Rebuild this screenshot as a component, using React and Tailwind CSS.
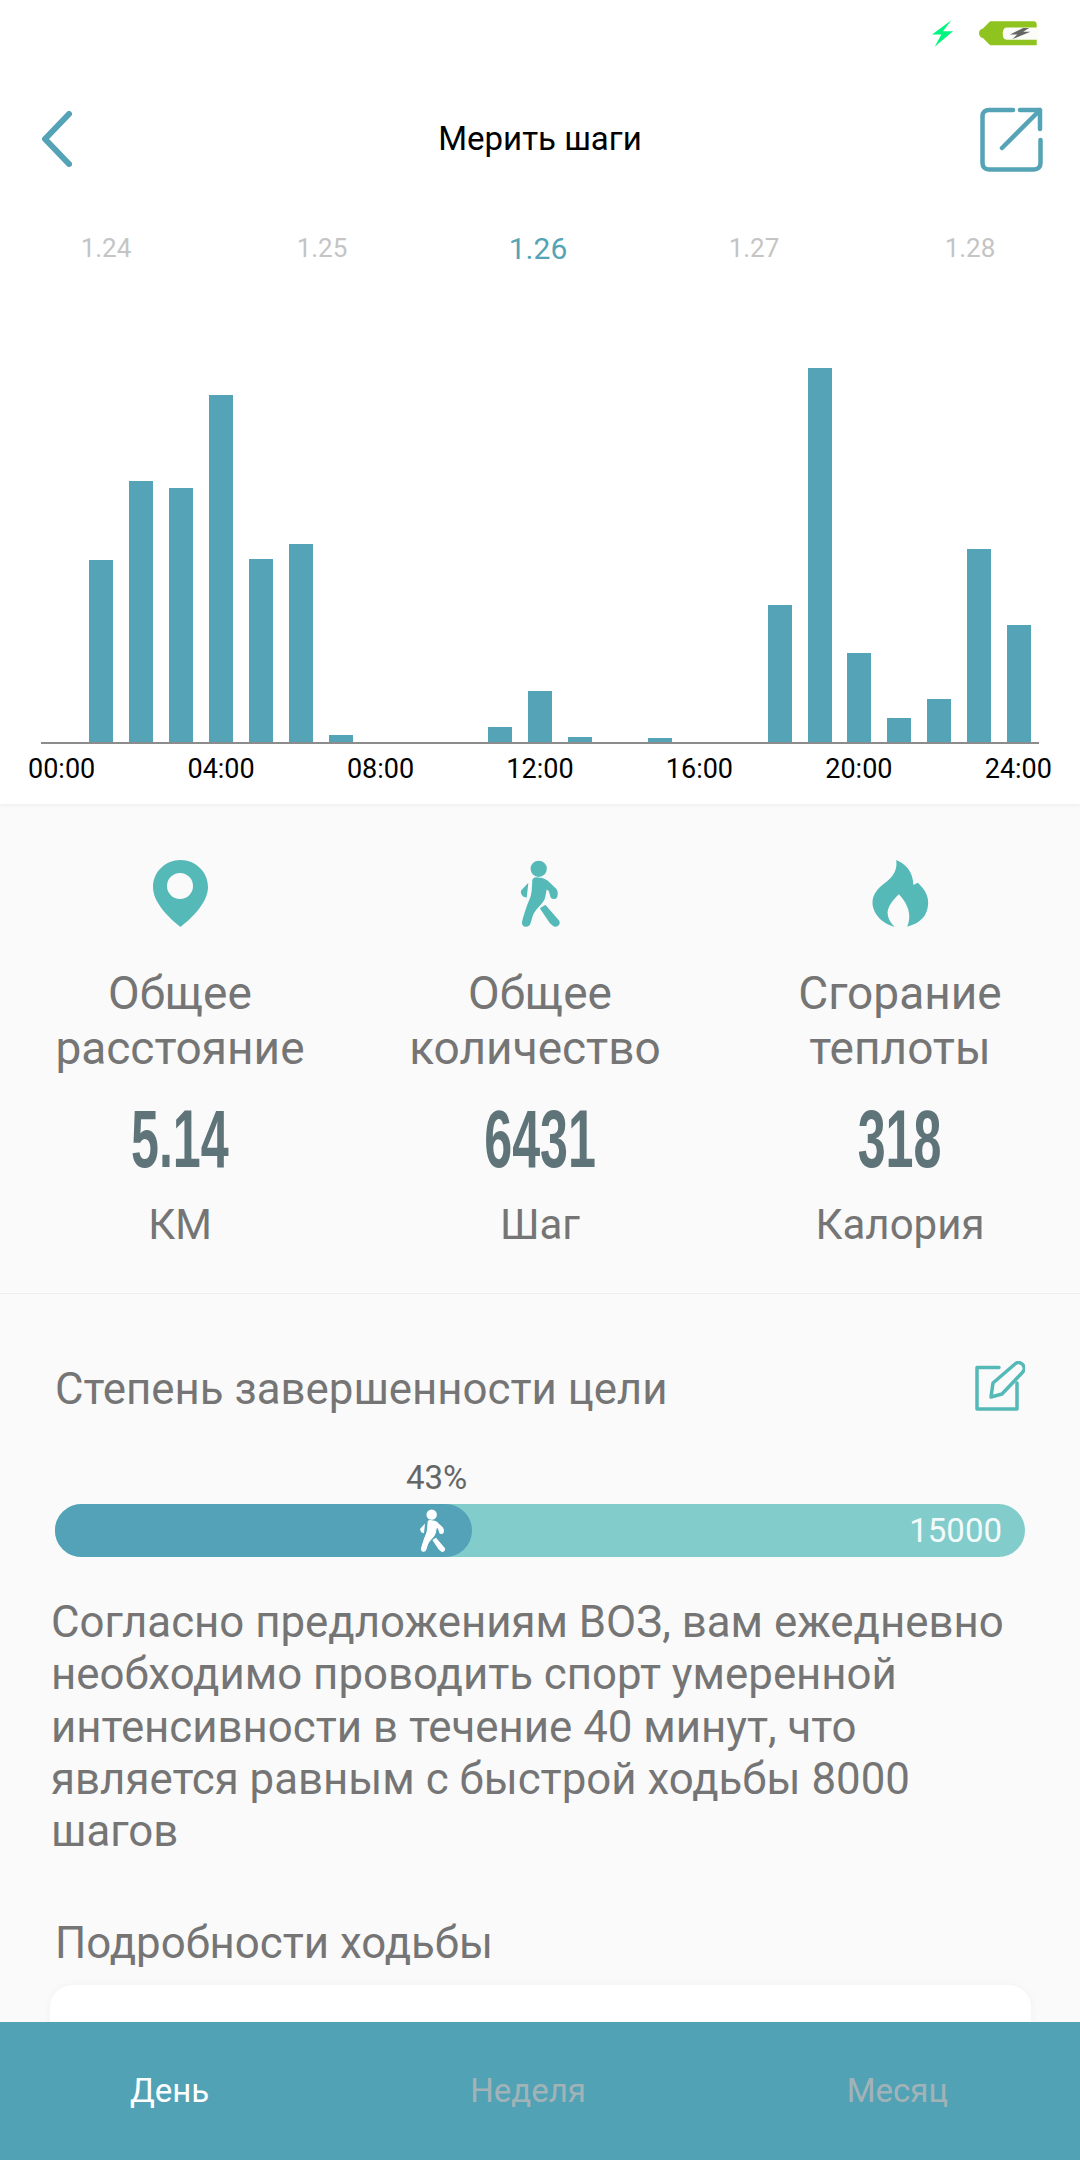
const bars = [0, 182, 261, 254, 347, 183, 198, 7, 0, 0, 0, 15, 51, 5, 0, 4, 0, 0, 137, 374, 89, 24, 43, 193, 117];
const hours = ["00:00", "04:00", "08:00", "12:00", "16:00", "20:00", "24:00"];

function Walker({ className }) {
  return (
    <svg viewBox="88 56 122 206" className={className} fill="currentColor" stroke="currentColor" strokeWidth="5" strokeLinejoin="round">
      <circle cx="145" cy="83" r="25" stroke="none" />
      <path d="M128 118C128 112 135 110 145 112C158 113 170 118 178 128L197 146C200 150 202 160 200 168C198 175 188 174 184 170L178 150L168 142L162 172C158 190 135 200 125 225L118 248C114 262 98 262 96 250C96 240 105 215 112 195C118 180 125 170 126 150Z" />
      <path d="M113 126L91 150C88 156 92 163 97 168L108 172C110 155 112 140 113 126Z" stroke="none" />
      <path d="M152 205L165 197L205 243C210 250 205 260 195 259C190 258 185 252 180 247Z" />
    </svg>
  );
}

function Stat({ icon, title, value, unit }) {
  return (
    <div className="flex flex-col items-center">
      <div className="flex h-[67px] items-center justify-center">{icon}</div>
      <div className="mt-[39px] text-center text-[46px] leading-[55px] whitespace-nowrap text-[#757575]">{title}</div>
      <div className="mt-[23px] flex h-[80px] items-center justify-center">
        <span className="inline-block scale-x-[0.62] font-['Liberation_Sans',sans-serif] text-[81px] leading-[80px] font-bold text-[#5f7479]">
          {value}
        </span>
      </div>
      <div className="mt-[18px] text-[42px] leading-[56px] text-[#757575]">{unit}</div>
    </div>
  );
}

export default function App() {
  return (
    <div className="flex h-[2160px] w-[1080px] flex-col overflow-hidden bg-[#fafafa] font-[Roboto,sans-serif]">
      <div className="min-h-0 flex-1 overflow-hidden">
        {/* Top white block */}
        <div className="h-[804px] bg-white shadow-[0_1px_4px_rgba(0,0,0,0.06)]">
          {/* Status bar */}
          <div className="flex h-[94px] items-start justify-end gap-[26px] pt-[20px] pr-[41px]">
            <svg viewBox="97 62 63 80" className="h-[27px] w-[21px]" fill="#00f57e">
              <path d="M155 62L97 105H125L105 142L160 95H130Z" />
            </svg>
            <svg viewBox="238 62 182 74" className="h-[27px] w-[60px]">
              <path d="M238 98C238 90 244 85 250 84L268 66C270 63 272 62 276 62H404C410 62 413 66 413 72V135H276C272 135 270 134 268 131L250 113C244 112 238 106 238 98Z" fill="#8fc31f" />
              <path d="M322 81H420V118H322C314 118 310 112 310 100C310 88 314 81 322 81Z" fill="#fbfbf8" />
              <path d="M372 82L332 102H354L340 116L394 94H372L390 82Z" fill="#666" />
            </svg>
          </div>

          {/* Header */}
          <div className="grid h-[90px] grid-cols-[1fr_auto_1fr] items-center pr-[37px] pl-[42px]">
            <svg viewBox="0 0 30 56" className="h-[56px] w-[30px]" fill="none" stroke="#55a3b6" strokeWidth="6" strokeLinecap="round" strokeLinejoin="round">
              <path d="M27 3L3 28L27 53" />
            </svg>
            <div className="mr-[5px] text-[33px] leading-[40px] text-black">Мерить шаги</div>
            <svg viewBox="0 0 63 65" className="h-[65px] w-[63px] justify-self-end" fill="none" stroke="#55a3b6" strokeWidth="4.5" strokeLinecap="round" strokeLinejoin="round">
              <path d="M33 3H9C5 3 2.5 5.5 2.5 9V56C2.5 60 5 62.5 9 62.5H54C58 62.5 60.5 60 60.5 56V33" />
              <path d="M22 41L60 3M40 3H60V22" />
            </svg>
          </div>

          {/* Dates */}
          <div className="mt-[30px] ml-[-2px] grid h-[68px] w-[1080px] grid-cols-5 items-center text-center text-[26px] text-[#c4c4c4]">
            <span>1.24</span>
            <span>1.25</span>
            <span className="text-[30px] text-[#55a3b6]">1.26</span>
            <span>1.27</span>
            <span>1.28</span>
          </div>

          {/* Chart */}
          <div className="mx-[41px] flex h-[462px] items-end border-b-2 border-[#8c8c8c] pl-[0.4px]">
            {bars.map((h, i) => (
              <div key={i} className="flex flex-1 justify-center">
                <div className="w-[24px] bg-[#55a3b6]" style={{ height: h }} />
              </div>
            ))}
          </div>
          <div className="flex h-[50px] items-center justify-between px-[28px] text-[27px] text-black">
            {hours.map((h) => (
              <span key={h}>{h}</span>
            ))}
          </div>
        </div>

        {/* Totals */}
        <div className="grid h-[490px] grid-cols-3 border-b border-[#eeeeee] pt-[56px]">
          <Stat
            title={<>Общее<br />расстояние</>}
            value="5.14"
            unit="КМ"
            icon={
              <svg viewBox="0 0 55 67" className="h-[67px] w-[55px]" fill="#55b9b8">
                <path fillRule="evenodd" d="M27.5 0C42.7 0 55 12 55 27C55 42 40 57 27.5 67C15 57 0 42 0 27C0 12 12.3 0 27.5 0ZM27 13A13 13 0 1 0 27 39A13 13 0 1 0 27 13Z" />
              </svg>
            }
          />
          <Stat
            title={<>Общее<br /><span className="inline-block pr-[10px]">количество</span></>}
            value="6431"
            unit="Шаг"
            icon={<Walker className="h-[67px] w-[40px] text-[#55b9b8]" />}
          />
          <Stat
            title={<>Сгорание<br />теплоты</>}
            value="318"
            unit="Калория"
            icon={
              <svg viewBox="63 60 170 201" className="h-[67px] w-[57px]" fill="#55b9b8">
                <path d="M135 60C165 72 185 95 187 135C190 132 197 130 200 128C218 145 232 165 231 190C230 225 210 250 168 260C180 235 178 200 143 163C125 180 105 205 110 225C112 240 122 252 130 260C100 255 65 225 64 190C63 165 80 145 100 130C125 112 140 90 135 60Z" />
              </svg>
            }
          />
        </div>

        {/* Goal */}
        <div className="px-[55px] pt-[68px]">
          <div className="flex h-[56px] items-center justify-between text-[43.8px] whitespace-nowrap text-[#757575]">
            <span>Степень завершенности цели</span>
            <svg viewBox="0 0 50 50" className="-mt-[8px] h-[50px] w-[50px]" fill="none" stroke="#55b9b8" strokeWidth="3.5" strokeLinejoin="round" strokeLinecap="round">
              <path d="M24 6.5H2V48H42V22" />
              <path d="M16 36L18 22L40 3C43 0 48 2 49 6C50 8 48 11 46 13L27 33Z" />
            </svg>
          </div>
          <div className="mt-[40px] ml-[351px] h-[40px] text-[33px] leading-[40px] text-[#666666]">43%</div>
          <div className="mt-[6px] flex h-[53px] items-center rounded-full bg-[#83cccc]">
            <div className="flex h-[53px] w-[417px] shrink-0 items-center justify-end rounded-full bg-[#53a2b7] pr-[26px]">
              <Walker className="h-[43px] w-[27px] text-white" />
            </div>
            <span className="ml-auto pr-[23px] text-[33px] text-[#f4fbfb]">15000</span>
          </div>
        </div>

        <p className="mt-[39px] ml-[51px] text-[43.8px] leading-[52.3px] whitespace-nowrap text-[#757575]">
          Согласно предложениям ВОЗ, вам ежедневно
          <br />
          необходимо проводить спорт умеренной
          <br />
          интенсивности в течение 40 минут, что
          <br />
          является равным с быстрой ходьбы 8000
          <br />
          шагов
        </p>

        <div className="mt-[58px] ml-[55px] text-[43.8px] leading-[56px] whitespace-nowrap text-[#757575]">Подробности ходьбы</div>
        <div className="mt-[14px] ml-[50px] h-[200px] w-[981px] rounded-[22px] bg-white shadow-[0_0_10px_rgba(0,0,0,0.04)]" />
      </div>

      {/* Bottom tabs */}
      <div className="flex h-[138px] shrink-0 items-center justify-between bg-[#52a2b6] pr-[132px] pl-[130px] text-[33px]">
        <span className="text-white">День</span>
        <span className="text-[#a2b3b8]">Неделя</span>
        <span className="text-[#a2b3b8]">Месяц</span>
      </div>
    </div>
  );
}
